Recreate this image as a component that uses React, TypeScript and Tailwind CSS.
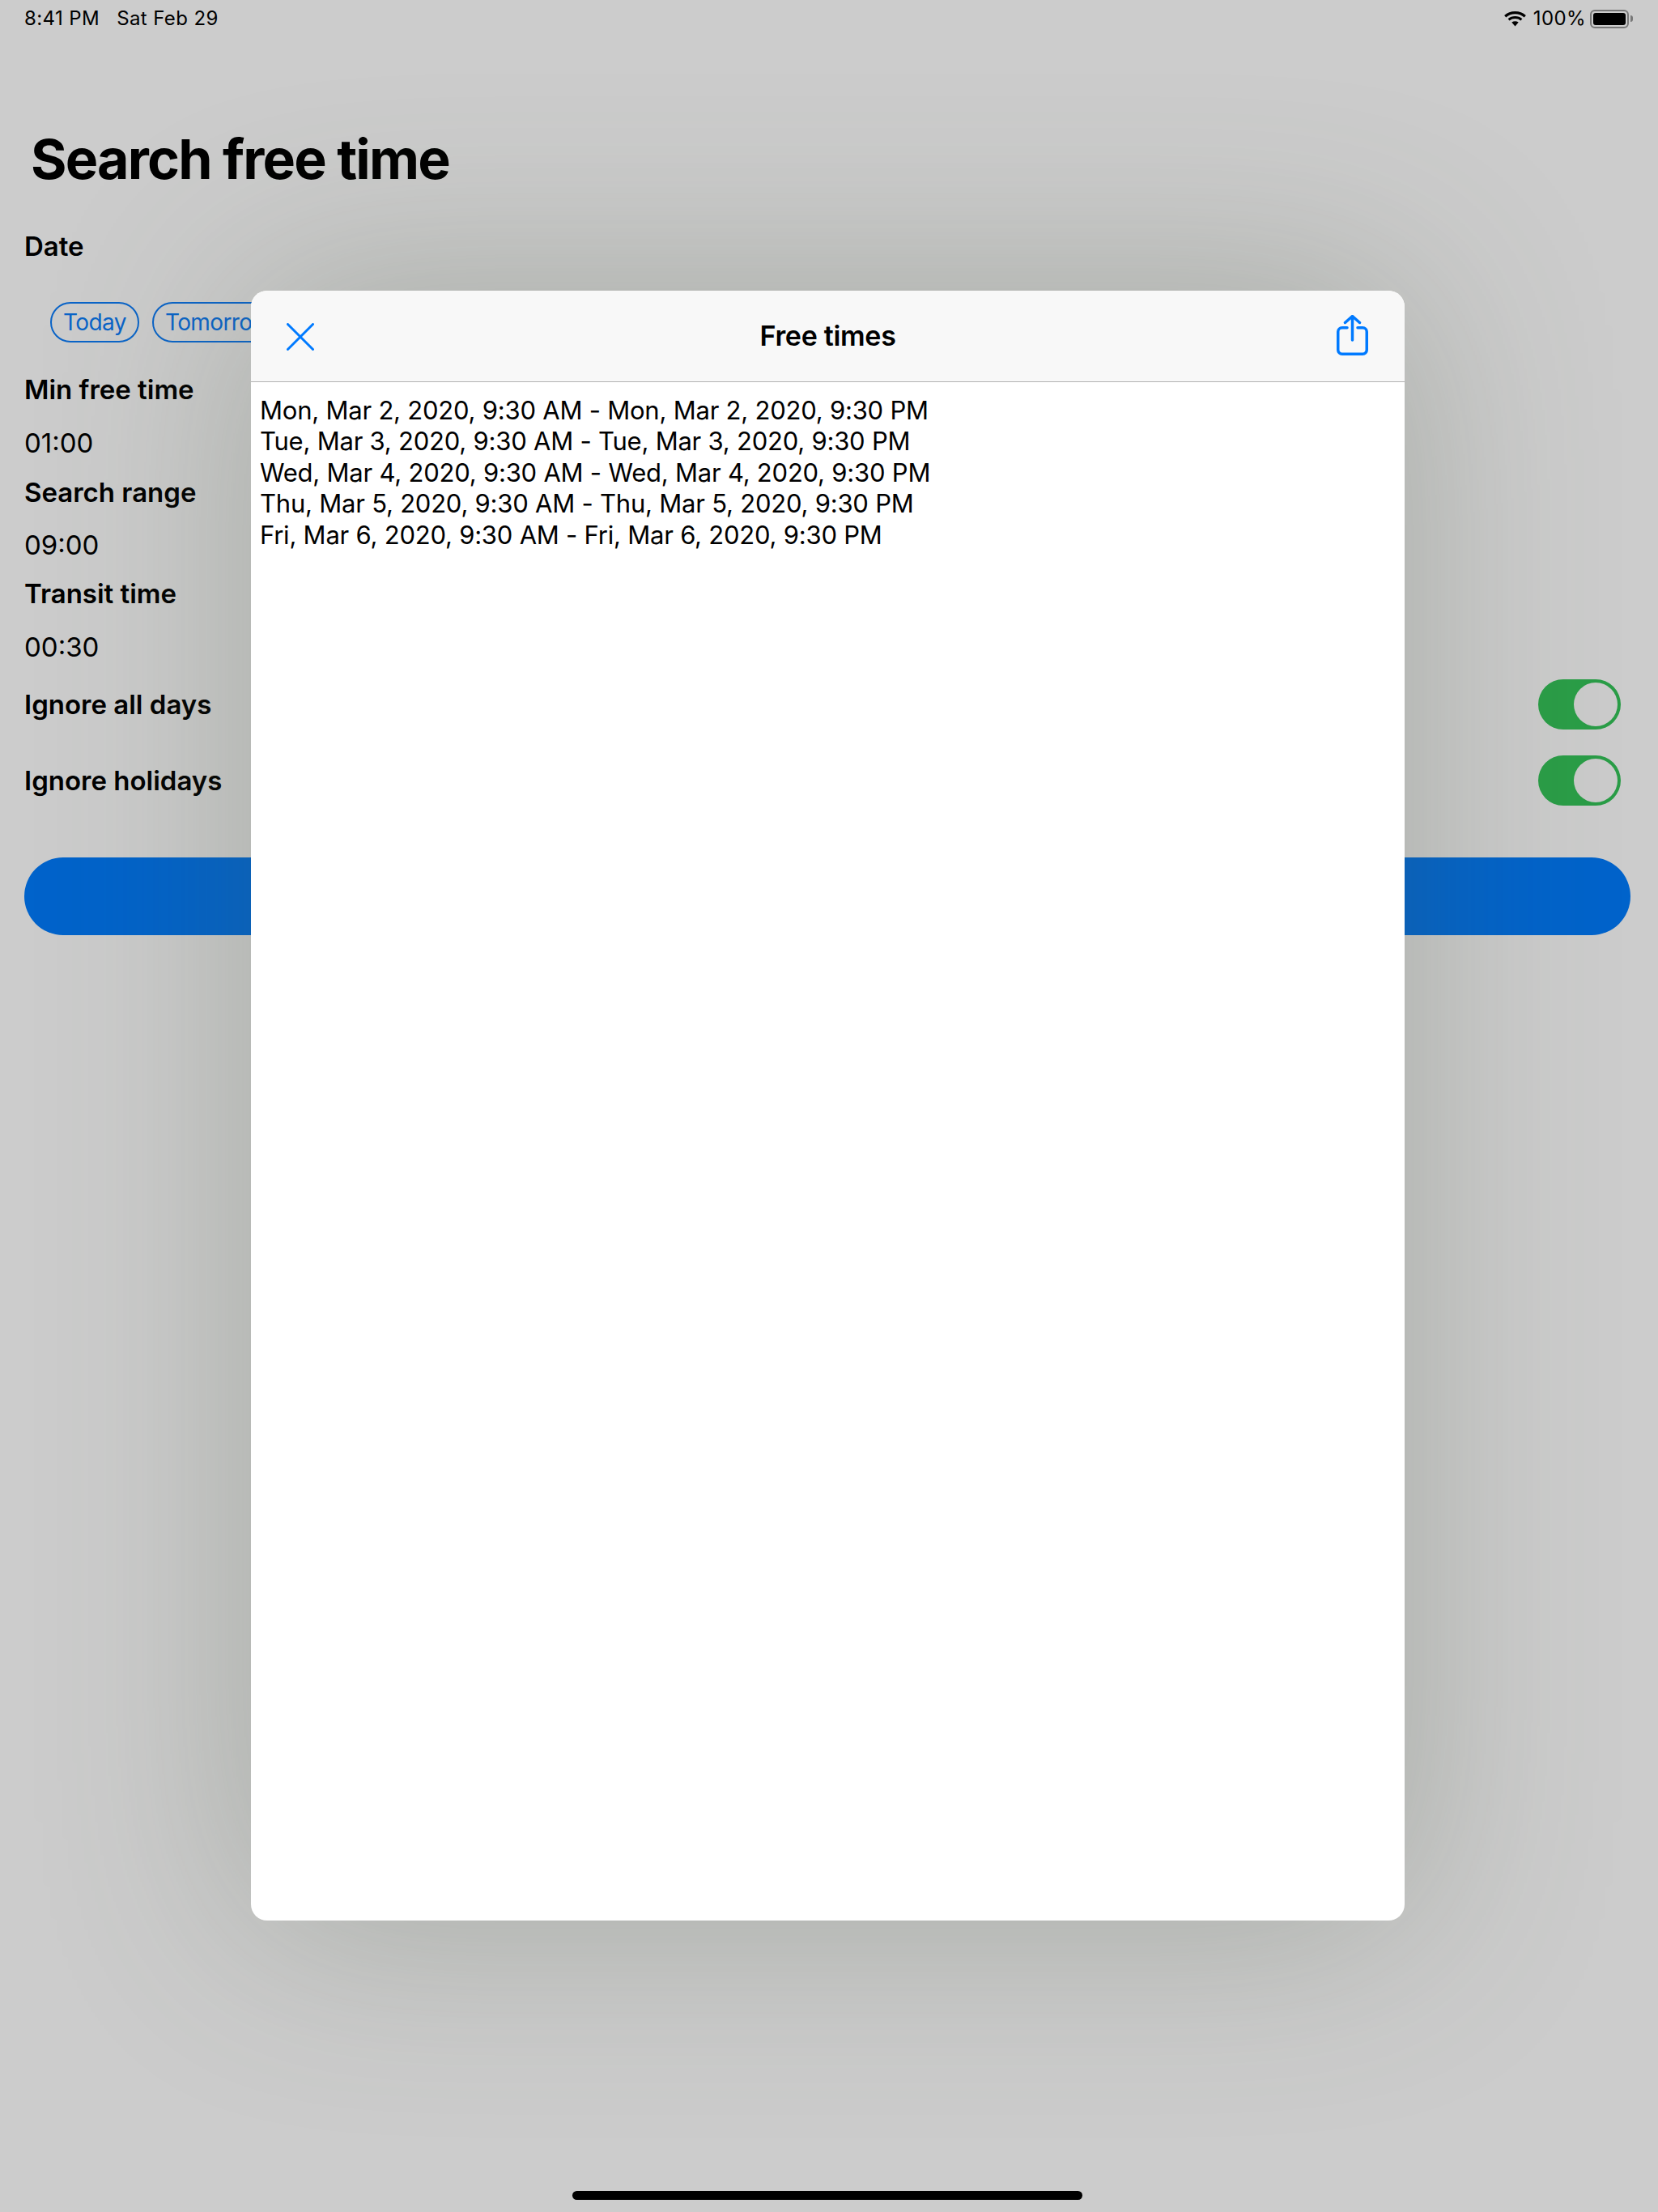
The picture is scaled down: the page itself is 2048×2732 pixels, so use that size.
import React from 'react';

const freeTimes = [
  'Mon, Mar 2, 2020, 9:30 AM - Mon, Mar 2, 2020, 9:30 PM',
  'Tue, Mar 3, 2020, 9:30 AM - Tue, Mar 3, 2020, 9:30 PM',
  'Wed, Mar 4, 2020, 9:30 AM - Wed, Mar 4, 2020, 9:30 PM',
  'Thu, Mar 5, 2020, 9:30 AM - Thu, Mar 5, 2020, 9:30 PM',
  'Fri, Mar 6, 2020, 9:30 AM - Fri, Mar 6, 2020, 9:30 PM',
];

function Wifi() {
  return (
    <svg width="27" height="20" viewBox="0 0 27 20" fill="none" className="mr-[4px]">
      <path d="M1.2 7.2C8 1 19 1 25.8 7.2" stroke="#000" strokeWidth="3.2" />
      <path d="M5.6 11.4C10 7.6 17 7.6 21.4 11.4" stroke="#000" strokeWidth="3" />
      <path d="M9.3 14.6L13.5 19.5 17.7 14.6C15 12.8 12 12.8 9.3 14.6Z" fill="#000" />
    </svg>
  );
}

function Battery() {
  return (
    <div className="flex items-center">
      <div className="w-[48px] h-[23px] rounded-[6px] border-2 border-[#777777] p-[2px]">
        <div className="w-full h-full rounded-[3px] bg-black" />
      </div>
      <div className="w-[3px] h-[8px] ml-[2px] rounded-r-full bg-[#777777]" />
    </div>
  );
}

function Label({ children, className }: { children: React.ReactNode; className?: string }) {
  return <div className={`text-[33px] leading-[40px] font-semibold ${className ?? ''}`}>{children}</div>;
}

function Value({ children, className }: { children: React.ReactNode; className?: string }) {
  return <div className={`text-[33px] leading-[40px] ${className ?? ''}`}>{children}</div>;
}

function Toggle({ label, className }: { label: string; className?: string }) {
  return (
    <div className={`flex items-center justify-between mr-[12px] ${className ?? ''}`}>
      <Label>{label}</Label>
      <div className="flex justify-end items-center w-[102px] h-[62px] pr-[4px] rounded-full bg-[#2a9d47]">
        <div className="w-[54px] h-[54px] rounded-full bg-[#cbcbcb]" />
      </div>
    </div>
  );
}

export default function App() {
  return (
    <div className="relative w-[2048px] h-[2732px] overflow-hidden bg-[#cccccc] text-black [font-family:Inter,sans-serif]">
      <div className="flex flex-col h-full pl-[30px] pr-[34px]">
        {/* Status bar */}
        <div className="flex items-center justify-between h-[46px] text-[24px] tracking-[0.4px]">
          <div className="flex gap-[21px]">
            <span>8:41 PM</span>
            <span>Sat Feb 29</span>
          </div>
          <div className="flex items-center gap-[5px] -mr-[3px]">
            <Wifi />
            <span>100%</span>
            <Battery />
          </div>
        </div>

        <h1 className="mt-[110px] ml-[8px] text-[68px] leading-[80px] font-bold tracking-[-1.8px]">Search free time</h1>

        <Label className="mt-[48px]">Date</Label>
        <div className="flex gap-[16px] mt-[49px] ml-[32px] text-[#0a64c8] text-[28px] tracking-[-0.6px]">
          <div className="flex items-center h-[50px] px-[14px] rounded-full border-2 border-[#0a64c8]">Today</div>
          <div className="flex items-center h-[50px] px-[14px] rounded-full border-2 border-[#0a64c8]">Tomorrow</div>
        </div>

        <Label className="mt-[38px]">Min free time</Label>
        <Value className="mt-[26px]">01:00</Value>
        <Label className="mt-[21px]">Search range</Label>
        <Value className="mt-[25px]">09:00</Value>
        <Label className="mt-[20px]">Transit time</Label>
        <Value className="mt-[26px]">00:30</Value>

        <Toggle label="Ignore all days" className="mt-[20px]" />
        <Toggle label="Ignore holidays" className="mt-[32px]" />

        <div className="h-[96px] mt-[64px] rounded-full bg-[#0063cb]" />

        <div className="w-[630px] h-[11px] mt-auto mb-[15px] ml-[677px] rounded-full bg-black" />
      </div>

      {/* Free times sheet */}
      <div className="absolute left-[310px] top-[359px] w-[1425px] h-[2013px] overflow-hidden rounded-[20px] bg-white shadow-[0_0_480px_rgba(77,91,71,0.3)]">
        <div className="flex items-center justify-between h-[113px] pl-[44px] pr-[44px] bg-[#f8f8f8] border-b border-[#b2b2b2]">
          <div className="w-[41px]">
            <svg width="34" height="34" viewBox="0 0 34 34" fill="none" className="mt-[2px]">
              <path d="M1.5 1.5L32.5 32.5M32.5 1.5L1.5 32.5" stroke="#007aff" strokeWidth="3" strokeLinecap="round" />
            </svg>
          </div>
          <div className="text-[34px] leading-[40px] font-semibold tracking-[-0.3px]">Free times</div>
          <svg width="41" height="51" viewBox="0 0 41 51" fill="none" className="mb-[2px]">
            <path d="M11.5 9.5L20.5 1.5L29.5 9.5M20.5 2V31" stroke="#007aff" strokeWidth="3.5" strokeLinecap="round" strokeLinejoin="round" />
            <path d="M14 15.75H7.75a5 5 0 0 0-5 5V43.25a5 5 0 0 0 5 5H33.25a5 5 0 0 0 5-5V20.75a5 5 0 0 0-5-5H27" stroke="#007aff" strokeWidth="3.5" strokeLinecap="round" />
          </svg>
        </div>
        <div className="pt-[16px] pl-[11px] text-[31px] leading-[38.4px] tracking-[-0.22px]">
          {freeTimes.map((t) => (
            <div key={t}>{t}</div>
          ))}
        </div>
      </div>
    </div>
  );
}
